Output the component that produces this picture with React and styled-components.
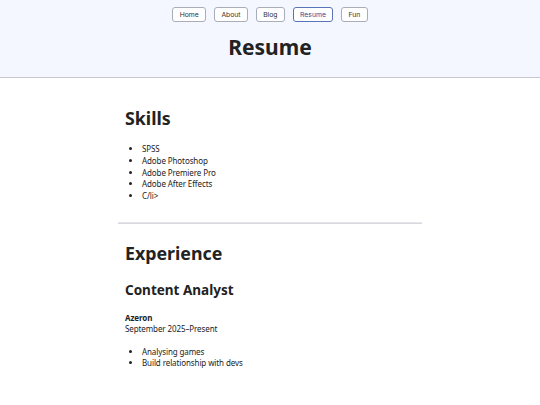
import React from "react";
import styled, { createGlobalStyle } from "styled-components";

const Global = createGlobalStyle`
  html, body { margin: 0; padding: 0; background: #ffffff; }
  body { font-family: "Noto Sans", "Open Sans", sans-serif; color: #222; }
`;

const Header = styled.header`
  background: #f4f7ff;
  border-bottom: 1px solid #c4c7d2;
  height: 78px;
  box-sizing: border-box;
  padding-top: 7px;
  display: flex;
  flex-direction: column;
  align-items: center;
`;

const Nav = styled.nav`
  display: flex;
  gap: 8px;
`;

const NavButton = styled.a`
  font-family: Inter, "Liberation Sans", sans-serif;
  font-size: 6.8px;
  height: 15px;
  box-sizing: border-box;
  padding: 0 6.3px;
  display: flex;
  align-items: center;
  border: 1px solid ${(p) => (p.$active ? "#5a74b8" : "#a9adb8")};
  color: ${(p) => (p.$active ? "#2e4a94" : "#333")};
  background: #fff;
  border-radius: 3px;
  text-decoration: none;
`;

const Title = styled.h1`
  margin: 12px 0 0;
  font-size: 21px;
  font-weight: 700;
  line-height: 26px;
  color: #222;
`;

const Main = styled.main`
  width: 304px;
  margin: 0 auto;
`;

const Section = styled.section`
  padding: 0 7px;
`;

const H2 = styled.h2`
  font-size: 17.8px;
  font-weight: 700;
  line-height: 24px;
  margin: ${(p) => p.$mt}px 0 0;
  color: #222;
`;

const H3 = styled.h3`
  font-size: 13.5px;
  font-weight: 700;
  line-height: 18px;
  margin: 16px 0 0;
  color: #222;
`;

const List = styled.ul`
  margin: ${(p) => p.$mt}px 0 0;
  padding-left: 17px;
  font-size: 8px;
  letter-spacing: -0.1px;
  line-height: ${(p) => p.$lh}px;
  color: #222;
`;

const Company = styled.div`
  margin-top: 13px;
  font-size: 8px;
  letter-spacing: -0.1px;
  font-weight: 700;
  line-height: 11.5px;
`;

const DateLine = styled.div`
  font-size: 8px;
  letter-spacing: -0.1px;
  line-height: 11.5px;
`;

const Divider = styled.hr`
  border: none;
  border-top: 1px solid #e6e6ea;
  border-bottom: 1px solid #d8d8e0;
  margin: 20px 0 0;
`;

export default function App() {
  const nav = ["Home", "About", "Blog", "Resume", "Fun"];
  return (
    <>
      <Global />
      <Header>
        <Nav>
          {nav.map((n) => (
            <NavButton key={n} href="#" $active={n === "Resume"}>
              {n}
            </NavButton>
          ))}
        </Nav>
        <Title>Resume</Title>
      </Header>
      <Main>
        <Section>
          <H2 $mt={28}>Skills</H2>
          <List $mt={13} $lh={11.8}>
            <li>SPSS</li>
            <li>Adobe Photoshop</li>
            <li>Adobe Premiere Pro</li>
            <li>Adobe After Effects</li>
            <li>C/li&gt;</li>
          </List>
        </Section>
        <Divider />
        <Section>
          <H2 $mt={17}>Experience</H2>
          <H3>Content Analyst</H3>
          <Company>Azeron</Company>
          <DateLine>September 2025–Present</DateLine>
          <List $mt={11} $lh={11.2}>
            <li>Analysing games</li>
            <li>Build relationship with devs</li>
          </List>
        </Section>
      </Main>
    </>
  );
}
